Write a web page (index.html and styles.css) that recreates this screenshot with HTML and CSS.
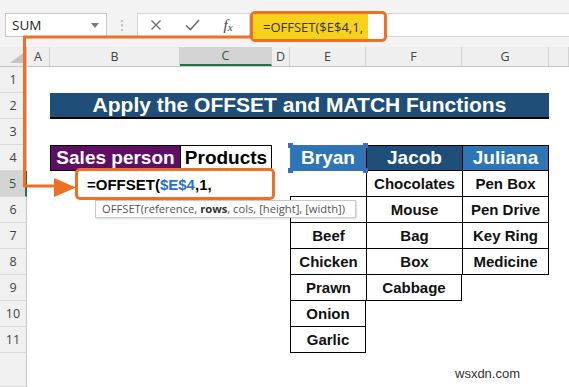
FILE: index.html
```html
<!DOCTYPE html>
<html lang="en">
<head>
    <meta charset="UTF-8">
    <title>OFFSET and MATCH</title>
    <link rel="stylesheet" href="styles.css">
</head>
<body>
    <div class="topbar">
        <div class="namebox"><span>SUM</span><span class="caret"></span></div>
        <div class="grip">&#8942;</div>
        <div class="fxbox">
            <span class="slot">
                <svg width="12" height="12" viewBox="0 0 12 12"><path d="M1.5 1.5 L10.5 10.5 M10.5 1.5 L1.5 10.5" stroke="#6e6e6e" stroke-width="1.4" fill="none"/></svg>
            </span>
            <span class="slot">
                <svg width="15" height="12" viewBox="0 0 15 12"><path d="M1 6.5 L5.5 10.5 L14 1" stroke="#6e6e6e" stroke-width="1.6" fill="none"/></svg>
            </span>
            <span class="slot fx"><i>f</i><i class="fx-x">x</i></span>
        </div>
        <div class="finput"></div>
    </div>

    <div class="colhead">
        <div class="corner"><span class="tri"></span></div>
        <div>A</div>
        <div>B</div>
        <div class="sel">C</div>
        <div>D</div>
        <div>E</div>
        <div>F</div>
        <div>G</div>
        <div></div>
    </div>

    <div class="sheet">
        <div class="row"><div class="rh">1</div></div>
        <div class="row">
            <div class="rh">2</div><div></div>
            <div class="title">Apply the OFFSET and MATCH Functions</div>
        </div>
        <div class="row"><div class="rh">3</div></div>
        <div class="row">
            <div class="rh">4</div><div></div>
            <div class="hd sales">Sales person</div>
            <div class="hd prod">Products</div>
            <div></div>
            <div class="hd bryan">Bryan
                <span class="h tl"></span><span class="h tr"></span><span class="h bl"></span><span class="h br"></span>
            </div>
            <div class="hd jacob">Jacob</div>
            <div class="hd juliana">Juliana</div>
        </div>
        <div class="row">
            <div class="rh sel">5</div><div></div><div></div><div></div><div></div>
            <div class="cell"></div>
            <div class="cell l">Chocolates</div>
            <div class="cell l r">Pen Box</div>
        </div>
        <div class="row">
            <div class="rh">6</div><div></div><div></div><div></div><div></div>
            <div class="cell l">Egg</div>
            <div class="cell l">Mouse</div>
            <div class="cell l r">Pen Drive</div>
        </div>
        <div class="row">
            <div class="rh">7</div><div></div><div></div><div></div><div></div>
            <div class="cell l">Beef</div>
            <div class="cell l">Bag</div>
            <div class="cell l r">Key Ring</div>
        </div>
        <div class="row">
            <div class="rh">8</div><div></div><div></div><div></div><div></div>
            <div class="cell l">Chicken</div>
            <div class="cell l">Box</div>
            <div class="cell l r">Medicine</div>
        </div>
        <div class="row">
            <div class="rh">9</div><div></div><div></div><div></div><div></div>
            <div class="cell l">Prawn</div>
            <div class="cell l r">Cabbage</div>
        </div>
        <div class="row">
            <div class="rh">10</div><div></div><div></div><div></div><div></div>
            <div class="cell l r">Onion</div>
        </div>
        <div class="row">
            <div class="rh">11</div><div></div><div></div><div></div><div></div>
            <div class="cell l r">Garlic</div>
        </div>
        <div class="row filler"><div class="rh"></div></div>
    </div>

    <!-- callout: formula bar box linked to the cell being edited -->
    <svg class="connector" width="569" height="387" viewBox="0 0 569 387">
        <path d="M251 37 H24.5 V186 H58" stroke="#ed7024" stroke-width="3" fill="none"/>
        <polygon points="54,178 76,187.5 54,197" fill="#ed7024"/>
    </svg>
    <div class="fbox"><span class="fbox-hl">=OFFSET($E$4,1,</span></div>
    <div class="editbox">=OFFSET(<span class="ref">$E$4</span>,1,</div>
    <div class="tip">OFFSET(reference, <b>rows</b>, cols, [height], [width])</div>
    <div class="mark">wsxdn.com</div>
</body>
</html>
```

FILE: styles.css
```css
:root { --cols: 27px 23px 130px 92px 18px 76px 96px 87px 1fr; }
body { margin: 0; width: 569px; height: 387px; overflow: hidden; position: relative; background: #fff; font-family: "Open Sans", "Noto Sans", sans-serif; color: #333; }

.topbar { display: flex; height: 47px; box-sizing: border-box; padding-top: 13px; background: #f3f3f3; }
.namebox { margin-left: 5px; width: 102px; height: 24px; box-sizing: border-box; border: 1px solid #c6c6c6; background: #fff; display: flex; align-items: center; justify-content: space-between; padding: 0 7px 0 6px; font-size: 13.5px; color: #222; }
.caret { border-left: 4px solid transparent; border-right: 4px solid transparent; border-top: 5px solid #7a7a7a; }
.grip { width: 30px; text-align: center; color: #b4b4b4; font-size: 14px; line-height: 24px; }
.fxbox { width: 113px; height: 24px; box-sizing: border-box; border: 1px solid #d6d6d6; background: #fff; display: flex; align-items: center; }
.slot { width: 36px; display: flex; justify-content: center; align-items: center; }
.fx { font-family: "Liberation Serif", serif; font-size: 15px; color: #444; }
.fx-x { font-size: 11px; margin-top: 4px; }
.finput { flex: 1; height: 24px; box-sizing: border-box; border: 1px solid #d6d6d6; border-right: 0; background: #fff; }

.colhead { display: grid; grid-template-columns: var(--cols); height: 20px; box-sizing: border-box; background: #efefef; border-bottom: 1px solid #c6c6c6; font-size: 12.5px; color: #444; }
.colhead > div { display: flex; align-items: center; justify-content: center; border-right: 1px solid #d3d3d3; }
.colhead .sel { background: #d4d4d4; border-bottom: 2px solid #217346; color: #1f5e3c; }
.colhead .corner { align-items: flex-end; justify-content: flex-end; padding: 0 3px 3px 0; border-right: 1px solid #c6c6c6; }
.tri { border-left: 13px solid transparent; border-bottom: 10px solid #c4c4c4; }

.row { display: grid; grid-template-columns: var(--cols); height: 26px; }
.row.filler { height: 34px; }
.rh { background: #f0f0f0; border-right: 1px solid #c6c6c6; border-bottom: 1px solid #d9d9d9; display: flex; align-items: center; justify-content: center; font-size: 12.5px; color: #444; box-sizing: border-box; }
.rh.sel { background: #d4d4d4; border-right: 2px solid #217346; color: #1f5e3c; }

.title { grid-column: 3 / 9; background: #1f4e78; color: #fff; font: bold 21px "Liberation Sans", Arial, sans-serif; display: flex; align-items: center; justify-content: center; border-bottom: 2px solid #000; }

.hd { font: bold 19px "Liberation Sans", Arial, sans-serif; display: flex; align-items: center; justify-content: center; box-sizing: border-box; }
.sales { background: #5f0f63; color: #fff; border: 1px solid #000; border-right: 0; }
.prod { background: #fff; color: #000; border: 1px solid #000; }
.bryan { background: #2e75b6; color: #fff; border: 1px solid #3a6fc4; position: relative; }
.jacob { background: #1f4e78; color: #fff; border: 1px solid #000; border-right: 0; }
.juliana { background: #2e75b6; color: #fff; border: 1px solid #000; }
.h { position: absolute; width: 5px; height: 5px; background: #3a6fc4; }
.tl { left: -3px; top: -3px; }
.tr { right: -3px; top: -3px; }
.bl { left: -3px; bottom: -3px; }
.br { right: -3px; bottom: -3px; }

.cell { border-bottom: 1px solid #000; font: bold 15px "Liberation Sans", Arial, sans-serif; color: #111; display: flex; align-items: center; justify-content: center; box-sizing: border-box; }
.cell.l { border-left: 1px solid #000; }
.cell.r { border-right: 1px solid #000; }

.connector { position: absolute; left: 0; top: 0; pointer-events: none; }
.fbox { position: absolute; left: 250px; top: 11px; width: 137px; height: 31px; box-sizing: border-box; border: 3px solid #ed7024; border-radius: 5px; background: #fff; display: flex; }
.fbox-hl { background: #f7d11a; width: 115px; box-sizing: border-box; padding-left: 10px; display: flex; align-items: center; font-size: 13px; color: #333; white-space: nowrap; }
.editbox { position: absolute; left: 75px; top: 168px; width: 200px; height: 32px; box-sizing: border-box; border: 3px solid #ed7024; border-radius: 5px; background: #fff; padding-left: 9px; display: flex; align-items: center; font: bold 15px "Liberation Sans", Arial, sans-serif; color: #000; white-space: pre; }
.ref { color: #2f6fc7; }
.tip { position: absolute; left: 95px; top: 200px; width: 261px; height: 18px; box-sizing: border-box; border: 1px solid #c8c8c8; background: #fff; box-shadow: 1px 1px 2px rgba(0,0,0,0.15); font-size: 11.2px; line-height: 16px; color: #555; padding-left: 6px; white-space: nowrap; }
.tip b { color: #333; }
.mark { position: absolute; left: 455px; top: 366px; font: 13px "Liberation Sans", Arial, sans-serif; color: #333; }
```
